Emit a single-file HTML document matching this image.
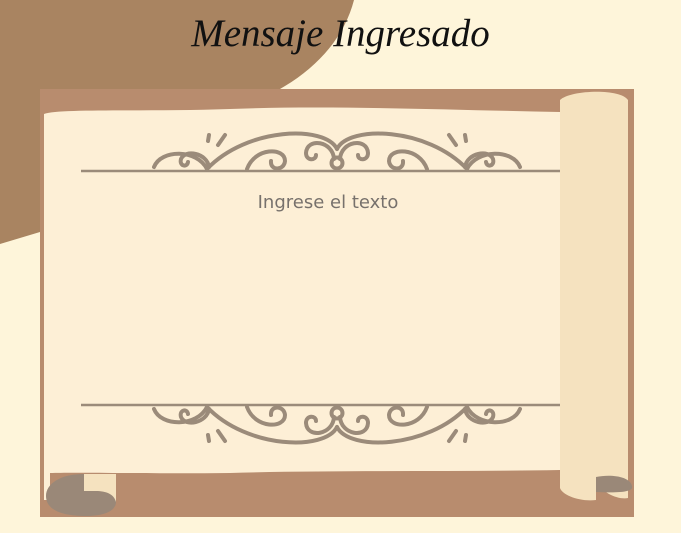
<!DOCTYPE html>
<html><head><meta charset="utf-8"><style>
html,body{margin:0;padding:0;width:681px;height:533px;overflow:hidden;background:#fef5da;}
svg{position:absolute;left:0;top:0}
.t{position:absolute;left:0;width:681px;text-align:center;top:11px;font-family:"URW Chancery L","Z003","Liberation Serif",cursive;font-style:italic;font-size:39px;color:#111;}
.s{position:absolute;left:0;width:656px;text-align:center;top:192px;font-family:"Comic Sans MS","DejaVu Sans",sans-serif;font-size:18px;color:#77716c;}
</style></head><body>
<svg width="681" height="533" viewBox="0 0 681 533">
<defs>
<g id="half" fill="none" stroke="#9b8b7a" stroke-width="4" stroke-linecap="round">
<path d="M0,-22 C12,-46 90,-44 130,-2"/>
<path d="M3,-12 C4,-30 30,-34 31,-18 C31,-10 21,-10 21,-16"/>
<path d="M90,-2 C82,-24 52,-24 52,-10 C53,0 67,0 66,-10"/>
<path d="M130,-2 C140,-22 176,-22 183,-4"/>
<path d="M128,-4 C130,-18 152,-22 156,-12 C158,-5 150,-3 149,-9"/>
<path d="M112,-36 L119,-26"/>
<path d="M128,-36 L129,-30"/>
</g>
<g id="orn">
<use href="#half"/>
<use href="#half" transform="scale(-1,1)"/>
<circle cx="0" cy="-8" r="5.5" fill="none" stroke="#9b8b7a" stroke-width="4"/>
</g>
</defs>
<path d="M0,0 L354,0 C345,35 320,65 285,86 L270,95 L40,232 L0,244 Z" fill="#a98461"/>
<rect x="40" y="89" width="594" height="428" fill="#b88c6e"/>
<path d="M44,114 C60,108 150,112 230,109 C330,105 450,110 560,112 L560,470 C450,472 330,470 230,473 C150,474 80,472 50,473 L50,500 L44,500 Z" fill="#fdefd6"/>
<path d="M560,100 C570,90 620,88 628,100 L628,498 C620,500 600,494 596,478 L596,500 C580,502 562,495 560,488 Z" fill="#f5e2bf"/>
<path d="M596,477 C610,474 630,476 632,486 C634,492 620,493 596,492 Z" fill="#9a8878"/>
<path d="M84,474 C60,474 46,484 46,496 C46,510 62,516 86,516 C106,516 116,510 116,502 C116,494 108,491 96,491 L86,491 Z" fill="#9a8878"/>
<path d="M84,474 L116,474 L116,502 C114,494 106,491 96,491 L84,491 Z" fill="#f5e2bf"/>
<line x1="81" y1="171" x2="560" y2="171" stroke="#9b8b7a" stroke-width="2.5"/>
<line x1="81" y1="405" x2="560" y2="405" stroke="#9b8b7a" stroke-width="2.5"/>
<g transform="translate(337,171)"><use href="#orn"/></g>
<g transform="translate(337,405) scale(1,-1)"><use href="#orn"/></g>
</svg>
<div class="t">Mensaje Ingresado</div>
<div class="s">Ingrese el texto</div>
</body></html>
